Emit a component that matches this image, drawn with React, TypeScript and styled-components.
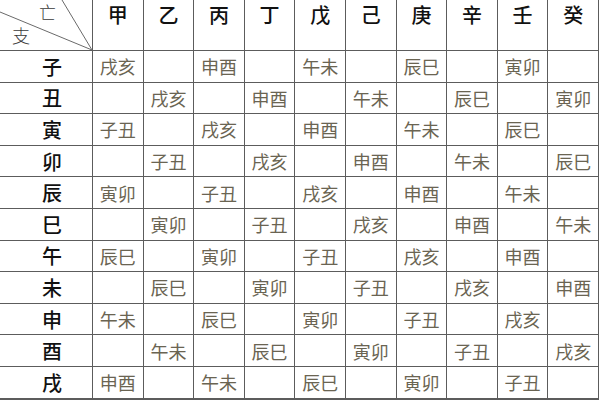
import React from "react";
import styled, { createGlobalStyle } from "styled-components";

const Global = createGlobalStyle`
  html, body { margin: 0; padding: 0; background: #ffffff; }
  body { font-family: "Noto Sans CJK SC", "Noto Sans", sans-serif; }
`;

const Table = styled.div`
  display: grid;
  width: 598px;
  grid-template-columns: 92px repeat(10, 1fr);
  grid-template-rows: 50px repeat(11, 30.6px);
  gap: 1px;
  padding: 0 1px 2px 0;
  background: #5c5c5c;
`;

const Corner = styled.div`
  position: relative;
  background: #fff;
  overflow: hidden;
`;

const CornerSvg = styled.svg`
  position: absolute;
  inset: 0;
  width: 92px;
  height: 50px;
`;

const CornerLabel = styled.span<{ $x: number; $y: number; $size: number }>`
  position: absolute;
  left: ${(p) => p.$x}px;
  top: ${(p) => p.$y}px;
  font-size: ${(p) => p.$size}px;
  line-height: 1.2;
  color: #3a3a3a;
  font-weight: 300;
`;

const HeadCell = styled.div`
  background: #fff;
  display: flex;
  justify-content: center;
  align-items: flex-start;
  padding-top: 0;
  font-size: 20px;
  line-height: normal;
  font-weight: 500;
  color: #111;
`;

const RowLabel = styled.div`
  background: #fff;
  display: flex;
  justify-content: center;
  align-items: center;
  padding-left: 12px;
  font-size: 20px;
  font-weight: 500;
  color: #111;
`;

const Cell = styled.div`
  background: #fff;
  display: flex;
  justify-content: center;
  align-items: center;
  font-size: 18px;
  font-weight: 400;
  color: #6a6452;
`;

const stems = ["甲", "乙", "丙", "丁", "戊", "己", "庚", "辛", "壬", "癸"];
const branches = ["子", "丑", "寅", "卯", "辰", "巳", "午", "未", "申", "酉", "戌"];
const voids = ["戌亥", "申酉", "午未", "辰巳", "寅卯", "子丑"];

const value = (r: number, c: number) => {
  if ((r + c) % 2 !== 0) return "";
  const idx = (((Math.floor(c / 2) - Math.floor(r / 2)) % 6) + 6) % 6;
  return voids[idx];
};

export default function App() {
  return (
    <>
      <Global />
      <Table>
        <Corner>
          <CornerSvg viewBox="0 0 92 50">
            <line x1="0" y1="12" x2="92" y2="50" stroke="#6a6a6a" strokeWidth="1" />
            <line x1="62" y1="0" x2="92" y2="50" stroke="#6a6a6a" strokeWidth="1" />
          </CornerSvg>
          <CornerLabel $x={39} $y={2} $size={17}>亡</CornerLabel>
          <CornerLabel $x={12} $y={25} $size={18}>支</CornerLabel>
        </Corner>
        {stems.map((s) => (
          <HeadCell key={s}>{s}</HeadCell>
        ))}
        {branches.map((b, r) => (
          <React.Fragment key={b}>
            <RowLabel>{b}</RowLabel>
            {stems.map((s, c) => (
              <Cell key={s}>{value(r, c)}</Cell>
            ))}
          </React.Fragment>
        ))}
      </Table>
    </>
  );
}
